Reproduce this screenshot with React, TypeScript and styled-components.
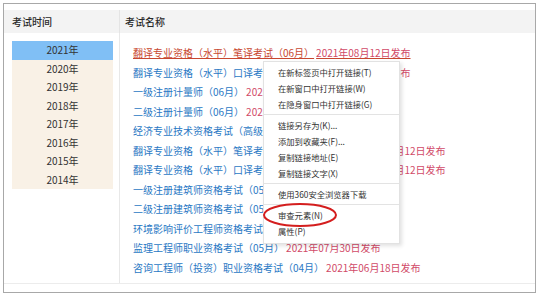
import React from "react";
import styled, { createGlobalStyle } from "styled-components";

const Global = createGlobalStyle`
  html, body { margin: 0; padding: 0; background: #fff; }
  body { font-family: "Noto Sans CJK SC", "Noto Sans", sans-serif; }
  * { box-sizing: border-box; }
`;

const Frame = styled.div`
  position: relative;
  margin: 3px 0 0 3px;
  width: 533px;
  height: 290px;
  border: 1px solid #a8a8a8;
  padding-top: 6px;
  display: flex;
  flex-direction: column;
`;

const Table = styled.div`
  display: grid;
  grid-template-columns: 116px 1fr;
  grid-template-rows: 23px 250px;
`;

const HeadCell = styled.div<{ $left?: boolean }>`
  background: #f3f3f3;
  border-right: ${(p) => (p.$left ? "1px solid #e4e4e4" : "none")};
  padding-left: ${(p) => (p.$left ? "8px" : "5px")};
  font-size: 10px;
  line-height: 23px;
  color: #2a2a2a;
  font-weight: 500;
`;

const LeftBody = styled.div`
  border-right: 1px solid #e8e8e8;
  padding: 8px 6px 0 8px;
`;

const YearList = styled.div`
  background: #f9f1e6;
  display: flex;
  flex-direction: column;
`;

const Year = styled.div<{ $active?: boolean }>`
  height: 18.5px;
  line-height: 18.5px;
  text-align: center;
  font-size: 10px;
  color: #333;
  background: ${(p) => (p.$active ? "#80bff5" : "transparent")};
`;

const RightBody = styled.div`
  padding: 10px 0 0 13px;
`;

const Row = styled.div<{ $hover?: boolean }>`
  height: 19.5px;
  line-height: 19.5px;
  font-size: 10px;
  white-space: nowrap;
  text-decoration: ${(p) => (p.$hover ? "underline" : "none")};
  text-decoration-color: #c8472f;
`;

const Name = styled.span<{ $hover?: boolean }>`
  color: ${(p) => (p.$hover ? "#c8472f" : "#2a78c4")};
`;

const Date = styled.span`
  color: #d14a68;
  margin-left: 2px;
`;

const Footer = styled.div`
  flex: 1;
  border-top: 1px solid #ececec;
`;

const Menu = styled.div`
  position: absolute;
  left: 259px;
  top: 57px;
  width: 137px;
  background: #fff;
  border: 1px solid #e2e2e2;
  box-shadow: 2px 2px 4px rgba(0, 0, 0, 0.12);
  padding: 2px 0 4px;
  display: flex;
  flex-direction: column;
`;

const Item = styled.div`
  height: 16px;
  line-height: 16px;
  padding-left: 14px;
  font-size: 8.3px;
  color: #333;
  white-space: nowrap;
`;

const Sep = styled.div`
  height: 5px;
  display: flex;
  align-items: center;
  &::after {
    content: "";
    flex: 1;
    height: 1px;
    background: #e3e3e3;
  }
`;

const Circle = styled.svg`
  position: absolute;
  left: 258px;
  top: 198px;
  overflow: visible;
`;

const years = ["2021年", "2020年", "2019年", "2018年", "2017年", "2016年", "2015年", "2014年"];

const rows: { name: string; date: string }[] = [
  { name: "翻译专业资格（水平）笔译考试（06月）", date: "2021年08月12日发布" },
  { name: "翻译专业资格（水平）口译考试（06月）", date: "2021年08月12日发布" },
  { name: "一级注册计量师（06月）", date: "2021年08月10日发布" },
  { name: "二级注册计量师（06月）", date: "2021年08月10日发布" },
  { name: "经济专业技术资格考试（高级）", date: "2021年08月10日发布" },
  { name: "翻译专业资格（水平）笔译考试（一级）（06月）", date: "2021年08月12日发布" },
  { name: "翻译专业资格（水平）口译考试（一级）（06月）", date: "2021年08月12日发布" },
  { name: "一级注册建筑师资格考试（05月）", date: "2021年08月05日发布" },
  { name: "二级注册建筑师资格考试（05月）", date: "2021年08月05日发布" },
  { name: "环境影响评价工程师资格考试", date: "" },
  { name: "监理工程师职业资格考试（05月）", date: "2021年07月30日发布" },
  { name: "咨询工程师（投资）职业资格考试（04月）", date: "2021年06月18日发布" },
];

type MenuEntry = string | null;
const menu: MenuEntry[] = [
  "在新标签页中打开链接(T)",
  "在新窗口中打开链接(W)",
  "在隐身窗口中打开链接(G)",
  null,
  "链接另存为(K)...",
  "添加到收藏夹(F)...",
  "复制链接地址(E)",
  "复制链接文字(X)",
  null,
  "使用360安全浏览器下载",
  null,
  "审查元素(N)",
  "属性(P)",
];

export default function App() {
  return (
    <>
      <Global />
      <Frame>
        <Table>
          <HeadCell $left>考试时间</HeadCell>
          <HeadCell>考试名称</HeadCell>
          <LeftBody>
            <YearList>
              {years.map((y, i) => (
                <Year key={y} $active={i === 0}>
                  {y}
                </Year>
              ))}
            </YearList>
          </LeftBody>
          <RightBody>
            {rows.map((r, i) => (
              <Row key={i} $hover={i === 0}>
                <Name $hover={i === 0}>{r.name}</Name>
                {r.date && <Date>{r.date}</Date>}
              </Row>
            ))}
          </RightBody>
        </Table>
        <Footer />
        <Menu>
          {menu.map((m, i) => (m === null ? <Sep key={i} /> : <Item key={i}>{m}</Item>))}
        </Menu>
        <Circle width="76" height="26" viewBox="0 0 76 26">
          <ellipse cx="38" cy="13" rx="36" ry="11" fill="none" stroke="#d41e1e" strokeWidth="2" />
        </Circle>
      </Frame>
    </>
  );
}
